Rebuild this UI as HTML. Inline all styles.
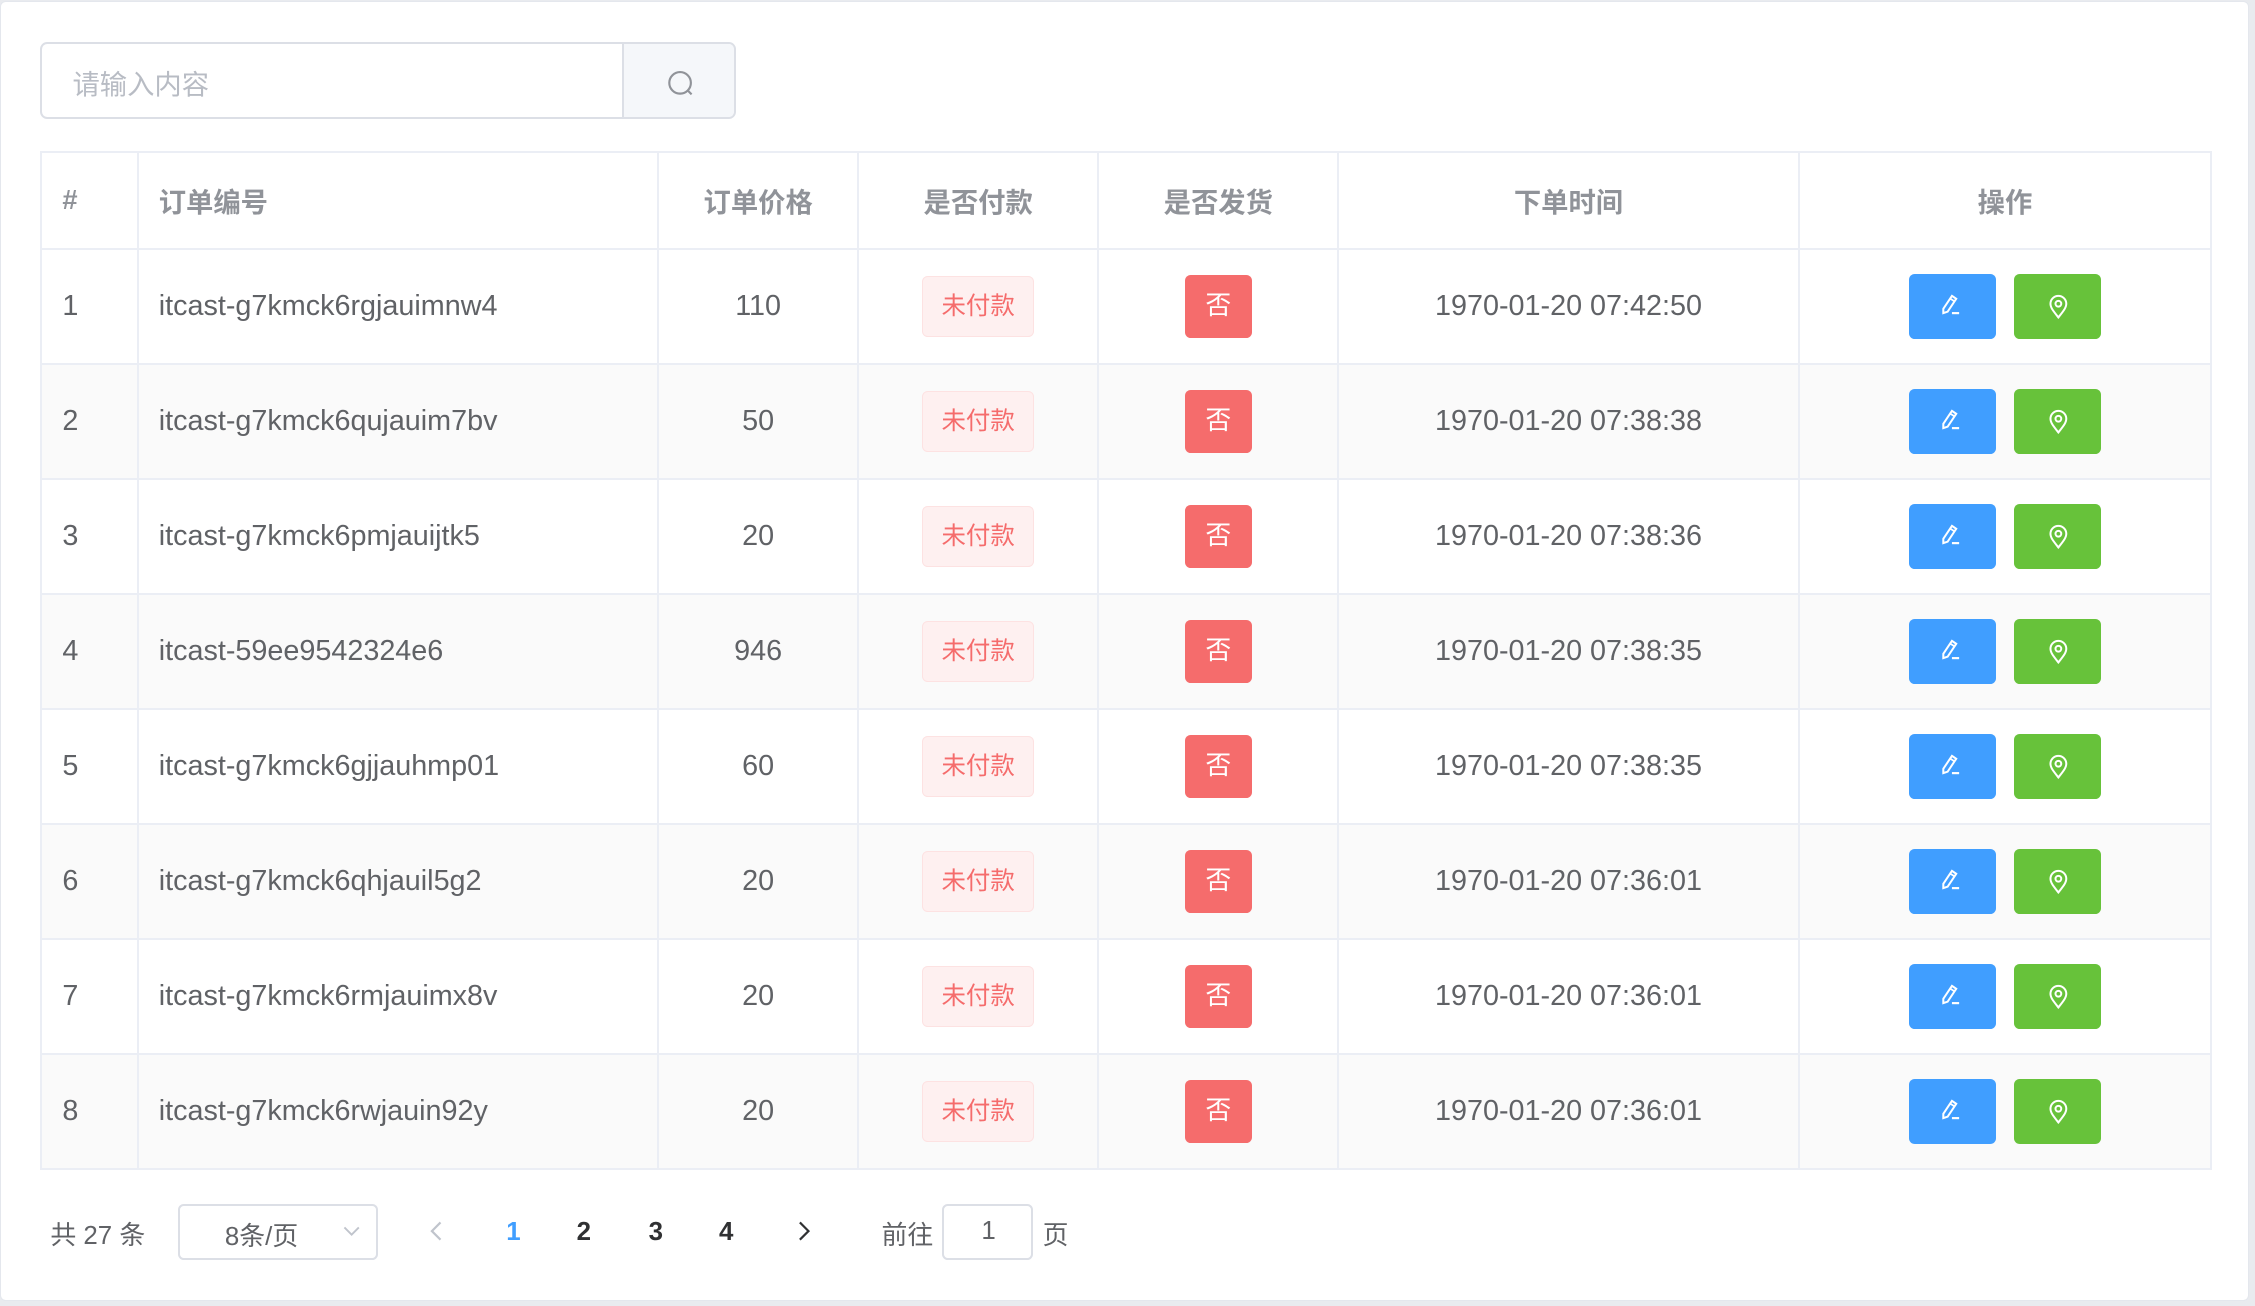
<!DOCTYPE html>
<html><head><meta charset="utf-8"><style>
html,body{margin:0;padding:0;background:#e9ebef;width:2255px;height:1306px;overflow:hidden}
#z{zoom:1.4381;width:1568px;height:908px;position:relative;font-family:"Liberation Sans","Noto Sans CJK SC",sans-serif}
.card{position:absolute;left:0;top:1px;width:1564px;height:904px;background:#fff;border:1px solid #e4e7ed;border-radius:4px;box-sizing:border-box}
.search{position:absolute;left:28px;top:29px;width:484px;height:54px;border:1.5px solid #dcdfe6;border-radius:5px;box-sizing:border-box;overflow:hidden}
.search .ph{position:absolute;left:21px;top:13px;font-size:19px;color:#b8bcc4}
.search .btn{position:absolute;left:403px;top:0;width:81px;height:100%;background:#f5f7fa;border-left:1.5px solid #dcdfe6}
table{position:absolute;left:28px;top:105px;border-collapse:collapse;width:1509px;table-layout:fixed}
td,th{border:1.5px solid #ebeef5;font-size:20px;color:#606266;font-weight:normal;padding:0}
th{height:66px;color:#909399;font-weight:bold;font-size:19px}
td{height:78.6px}
tr.s td{background:#fafafa}
.l{text-align:left;padding-left:14px}
.c{text-align:center}
.tag{display:inline-block;width:78px;height:42px;line-height:42px;background:#fef0f0;border:1px solid #fde2e2;color:#f56c6c;border-radius:4px;font-size:17px;box-sizing:border-box}
.no{display:inline-block;width:47px;height:44px;line-height:44px;background:#f56c6c;color:#fff;border-radius:4px;font-size:18px}
.b{display:inline-block;width:61px;height:45px;border-radius:4px;vertical-align:middle;position:relative}
.b svg{position:absolute;left:21px;top:13px}
.bl{background:#409eff;margin-right:12px}.gr{background:#67c23a}
.pg{position:absolute;top:845px;font-size:18px;color:#606266}
.box{position:absolute;border:1.5px solid #dcdfe6;border-radius:4px;box-sizing:border-box;top:837px;height:39px}
</style></head><body><div id="z">
<div class="card"></div>
<div class="search"><span class="ph">请输入内容</span><div class="btn"><svg width="81" height="54"><circle cx="39" cy="27" r="7.5" fill="none" stroke="#909399" stroke-width="1.5"/><path d="M44 32l3 3" stroke="#909399" stroke-width="1.5"/></svg></div></div>
<table>
<colgroup><col style="width:67px"><col style="width:362px"><col style="width:139px"><col style="width:167px"><col style="width:167px"><col style="width:320px"><col style="width:287px"></colgroup>
<tr><th class="l">#</th><th class="l">订单编号</th><th class="c">订单价格</th><th class="c">是否付款</th><th class="c">是否发货</th><th class="c">下单时间</th><th class="c">操作</th></tr>
<tbody id="tb"></tbody>
</table>
<span class="pg" style="left:35px">共 27 条</span>
<div class="box" style="left:124px;width:139px"><span style="position:absolute;left:31px;top:7px;font-size:18px;color:#606266">8条/页</span><svg style="position:absolute;left:113px;top:14px" width="12" height="8"><path d="M1 1l5 5 5-5" fill="none" stroke="#c0c4cc" stroke-width="1.3"/></svg></div>
<svg style="position:absolute;left:298px;top:849px" width="10" height="14"><path d="M8 1L2 7l6 6" fill="none" stroke="#c0c4cc" stroke-width="1.5"/></svg>
<span class="pg" style="left:352px;top:847px;color:#409eff;font-weight:bold">1</span>
<span class="pg" style="left:401px;top:847px;color:#303133;font-weight:bold">2</span>
<span class="pg" style="left:451px;top:847px;color:#303133;font-weight:bold">3</span>
<span class="pg" style="left:500px;top:847px;color:#303133;font-weight:bold">4</span>
<svg style="position:absolute;left:554px;top:849px" width="10" height="14"><path d="M2 1l6 6-6 6" fill="none" stroke="#303133" stroke-width="1.5"/></svg>
<span class="pg" style="left:613px">前往</span>
<div class="box" style="left:655px;width:63px"><span style="position:absolute;left:26px;top:8px;font-size:18px;color:#606266">1</span></div>
<span class="pg" style="left:725px">页</span>
</div>
<script>
var d=[["itcast-g7kmck6rgjauimnw4",110,"07:42:50"],["itcast-g7kmck6qujauim7bv",50,"07:38:38"],["itcast-g7kmck6pmjauijtk5",20,"07:38:36"],["itcast-59ee9542324e6",946,"07:38:35"],["itcast-g7kmck6gjjauhmp01",60,"07:38:35"],["itcast-g7kmck6qhjauil5g2",20,"07:36:01"],["itcast-g7kmck6rmjauimx8v",20,"07:36:01"],["itcast-g7kmck6rwjauin92y",20,"07:36:01"]];
var pen='<svg width="20" height="20" viewBox="0 0 20 20"><path d="M9 2l3 2-6 9-3 1 0-3z" fill="none" stroke="#fff" stroke-width="1.4"/><path d="M8 4l3 2" stroke="#fff" stroke-width="1.2"/><path d="M9 14h5" stroke="#fff" stroke-width="1.5"/></svg>';
var pin='<svg width="20" height="20" viewBox="0 0 20 20"><path d="M10 17C6 12 4.5 10 4.5 7.5a5.5 5.5 0 0 1 11 0C15.5 10 14 12 10 17z" fill="none" stroke="#fff" stroke-width="1.4"/><circle cx="10" cy="7.5" r="2" fill="none" stroke="#fff" stroke-width="1.4"/></svg>';
var h='';d.forEach(function(r,i){h+='<tr'+(i%2?' class="s"':'')+'><td class="l">'+(i+1)+'</td><td class="l">'+r[0]+'</td><td class="c">'+r[1]+'</td><td class="c"><span class="tag">未付款</span></td><td class="c"><span class="no">否</span></td><td class="c">1970-01-20 '+r[2]+'</td><td class="c"><span class="b bl">'+pen+'</span><span class="b gr">'+pin+'</span></td></tr>'});
document.getElementById('tb').innerHTML=h;
</script>
</body></html>
